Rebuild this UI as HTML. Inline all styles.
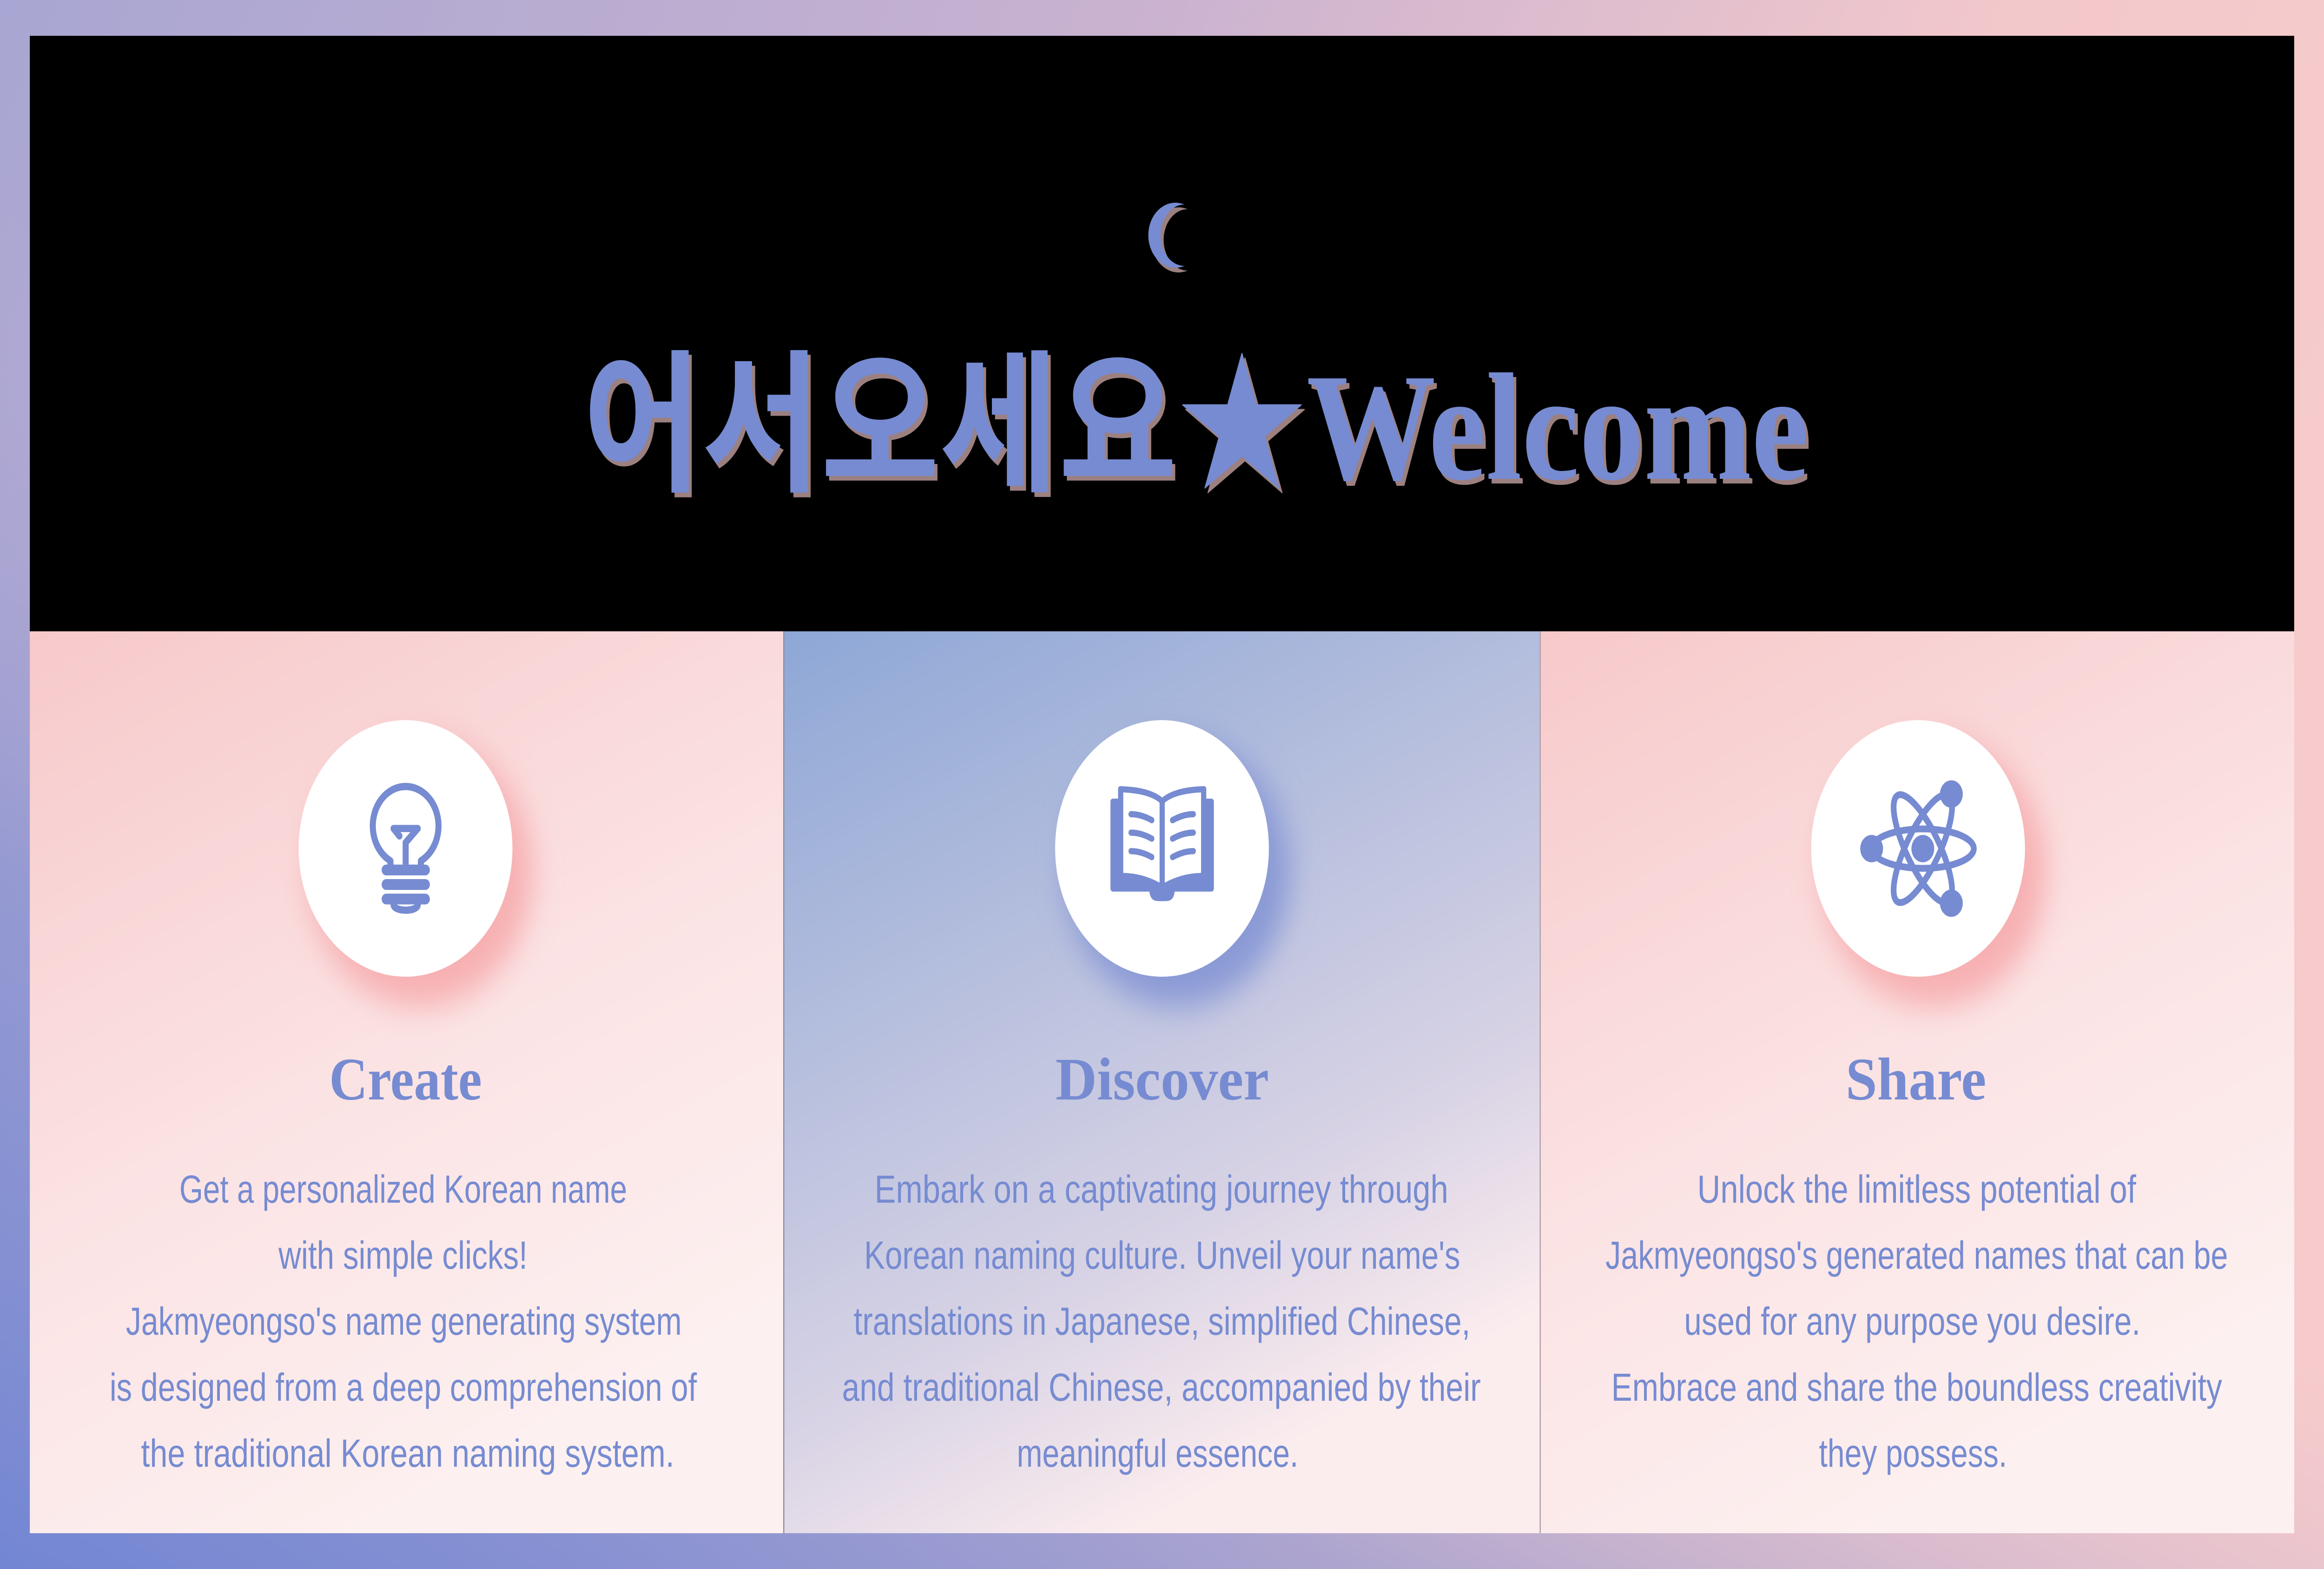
<!DOCTYPE html>
<html><head><meta charset="utf-8"><style>
html,body{margin:0;padding:0;width:100%;height:100%;overflow:hidden;background:#000}
svg{position:absolute;left:0;top:0;width:100vw;height:100vh;display:block}
</style></head><body>
<svg viewBox="0 0 6000 3375" preserveAspectRatio="none">
<defs>
<linearGradient id="fa" x1="0" y1="0" x2="1" y2="0.3">
<stop offset="0" stop-color="#a8a6d2"/><stop offset="0.45" stop-color="#c9b2d0"/><stop offset="0.8" stop-color="#f3c8cb"/><stop offset="1" stop-color="#f7cbcb"/>
</linearGradient>
<linearGradient id="fb" x1="0" y1="1" x2="0.6" y2="0.2">
<stop offset="0" stop-color="#7386d3" stop-opacity="1"/><stop offset="0.35" stop-color="#7f8ed2" stop-opacity="0.6"/><stop offset="0.7" stop-color="#c0b0d6" stop-opacity="0"/>
</linearGradient>
<linearGradient id="pk" x1="0" y1="0" x2="0.45" y2="1">
<stop offset="0" stop-color="#f7c9ca"/><stop offset="0.55" stop-color="#fbe2e3"/><stop offset="1" stop-color="#fdf0f0"/>
</linearGradient>
<linearGradient id="bl" x1="0" y1="0" x2="0.45" y2="1">
<stop offset="0" stop-color="#8ea7d6"/><stop offset="0.4" stop-color="#b5bedd"/><stop offset="0.75" stop-color="#d8d3e5"/><stop offset="1" stop-color="#fbecee"/>
</linearGradient>
<filter id="blur" x="-50%" y="-50%" width="200%" height="200%"><feGaussianBlur stdDeviation="35"/></filter>
</defs>
<rect x="0" y="0" width="6000" height="3375" fill="url(#fa)"/>
<rect x="0" y="0" width="6000" height="3375" fill="url(#fb)"/>
<rect x="77" y="77" width="5846" height="1281" fill="#000"/>
<rect x="77" y="1358" width="1947" height="1940" fill="url(#pk)"/>
<rect x="2024" y="1358" width="1952" height="1940" fill="url(#bl)"/>
<rect x="3976" y="1358" width="1947" height="1940" fill="url(#pk)"/>
<rect x="2022" y="1358" width="3" height="1940" fill="#8e8fa0"/>
<rect x="3975" y="1358" width="3" height="1940" fill="#b3a0a8"/>
<!-- circles with shadows -->
<circle cx="1085" cy="1875" r="290" fill="#f7b0b2" filter="url(#blur)"/>
<circle cx="3040" cy="1875" r="290" fill="#8a9ad6" filter="url(#blur)"/>
<circle cx="4992" cy="1875" r="290" fill="#f7b0b2" filter="url(#blur)"/>
<circle cx="1047" cy="1825" r="276" fill="#fff"/>
<circle cx="3000" cy="1825" r="276" fill="#fff"/>
<circle cx="4952" cy="1825" r="276" fill="#fff"/>
<!-- moon -->
<path d="M3058,440 A70,70 0 1 0 3058,572 A58,62 0 1 1 3058,440 Z" fill="#9c8080" transform="translate(8,10)"/>
<path d="M3058,440 A70,70 0 1 0 3058,572 A58,62 0 1 1 3058,440 Z" fill="#768bd1"/>
<!-- title -->
<g font-family="'Liberation Serif','Noto Sans CJK KR',serif" font-weight="bold" font-size="330">
<text x="1513" y="1040" textLength="3165" lengthAdjust="spacingAndGlyphs" fill="#9c8080">어서오세요★Welcome</text>
<text x="1505" y="1030" textLength="3165" lengthAdjust="spacingAndGlyphs" fill="#768bd1">어서오세요★Welcome</text>
</g>
<!-- bulb -->
<g transform="translate(700,1500) scale(0.4464)" fill="none" stroke="#768bd1" stroke-width="35" stroke-linecap="round" stroke-linejoin="round">
<path d="M690,805 L690,788 A190,190 0 1 1 866,788 L866,805"/>
<path d="M742,668 L708,632 L848,632 L778,700 L778,806"/>
<path d="M665,832 H892 M665,902 H892 M665,972 H892" stroke-width="52"/>
<path d="M708,998 C708,1035 850,1035 848,998"/>
</g>
<!-- book -->
<g transform="translate(2700,1500) scale(0.4464)" fill="#768bd1">
<rect x="374" y="488" width="598" height="448" rx="14"/>
<path d="M598,930 H746 C742,975 720,982 690,982 H655 C625,982 603,975 598,930 Z"/>
<path d="M418,442 Q418,428 433,428 Q600,432 673,483 Q746,432 913,428 Q928,428 928,442 L928,900 L418,900 Z"/>
<path d="M448,458 Q600,465 658,508 L658,893 Q560,848 448,846 Z" fill="#fff"/>
<path d="M898,458 Q746,465 688,508 L688,893 Q786,848 898,846 Z" fill="#fff"/>
<g fill="none" stroke="#768bd1" stroke-width="30" stroke-linecap="round">
<path d="M493,563 Q550,563 613,592 M493,652 Q550,652 613,681 M493,741 Q550,741 613,770"/>
<path d="M853,563 Q796,563 733,592 M853,652 Q796,652 733,681 M853,741 Q796,741 733,770"/>
</g>
</g>
<!-- atom -->
<g transform="translate(4650,1500) scale(0.4464)" fill="#768bd1">
<g fill="none" stroke="#768bd1" stroke-width="33">
<ellipse cx="704" cy="729" rx="295" ry="95"/>
<ellipse cx="704" cy="729" rx="295" ry="95" transform="rotate(60 704 729)"/>
<ellipse cx="704" cy="729" rx="295" ry="95" transform="rotate(-60 704 729)"/>
</g>
<circle cx="704" cy="729" r="66"/>
<circle cx="408" cy="729" r="66"/>
<circle cx="869" cy="466" r="66"/>
<circle cx="869" cy="992" r="66"/>
</g>
<!-- headings -->
<g font-family="'Liberation Serif',serif" font-weight="bold" font-size="130" fill="#768bd1">
<text x="850" y="2365" textLength="394" lengthAdjust="spacingAndGlyphs">Create</text>
<text x="2725" y="2365" textLength="551" lengthAdjust="spacingAndGlyphs">Discover</text>
<text x="4765" y="2365" textLength="363" lengthAdjust="spacingAndGlyphs">Share</text>
</g>
<g font-family="'Liberation Sans',sans-serif" font-size="84" fill="#768bd1">
<text x="463" y="2587" textLength="1156" lengthAdjust="spacingAndGlyphs">Get a personalized Korean name</text>
<text x="719" y="2729" textLength="643" lengthAdjust="spacingAndGlyphs">with simple clicks!</text>
<text x="325" y="2871" textLength="1435" lengthAdjust="spacingAndGlyphs">Jakmyeongso's name generating system</text>
<text x="283" y="3013" textLength="1516" lengthAdjust="spacingAndGlyphs">is designed from a deep comprehension of</text>
<text x="364" y="3155" textLength="1377" lengthAdjust="spacingAndGlyphs">the traditional Korean naming system.</text>

<text x="2258" y="2587" textLength="1481" lengthAdjust="spacingAndGlyphs">Embark on a captivating journey through</text>
<text x="2231" y="2729" textLength="1539" lengthAdjust="spacingAndGlyphs">Korean naming culture. Unveil your name's</text>
<text x="2204" y="2871" textLength="1592" lengthAdjust="spacingAndGlyphs">translations in Japanese, simplified Chinese,</text>
<text x="2174" y="3013" textLength="1649" lengthAdjust="spacingAndGlyphs">and traditional Chinese, accompanied by their</text>
<text x="2625" y="3155" textLength="727" lengthAdjust="spacingAndGlyphs">meaningful essence.</text>

<text x="4382" y="2587" textLength="1133" lengthAdjust="spacingAndGlyphs">Unlock the limitless potential of</text>
<text x="4145" y="2729" textLength="1607" lengthAdjust="spacingAndGlyphs">Jakmyeongso's generated names that can be</text>
<text x="4348" y="2871" textLength="1178" lengthAdjust="spacingAndGlyphs">used for any purpose you desire.</text>
<text x="4160" y="3013" textLength="1577" lengthAdjust="spacingAndGlyphs">Embrace and share the boundless creativity</text>
<text x="4696" y="3155" textLength="486" lengthAdjust="spacingAndGlyphs">they possess.</text>
</g>
</svg>
</body></html>
